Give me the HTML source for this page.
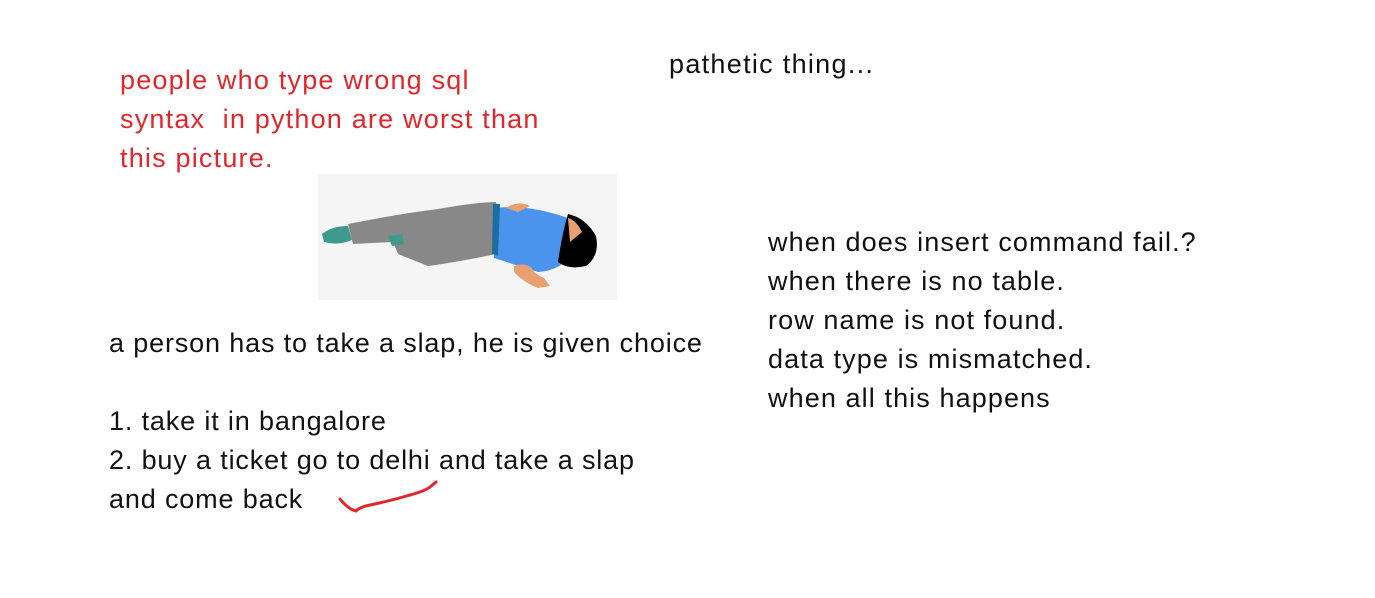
<!DOCTYPE html>
<html><head><meta charset="utf-8"><style>
html,body{margin:0;padding:0;background:#fff;width:1375px;height:598px;overflow:hidden;position:relative;font-family:"Liberation Sans",sans-serif;}
.t{position:absolute;font-size:27px;letter-spacing:0.85px;line-height:39px;color:#111;white-space:nowrap;}
.r{color:#e3262b;letter-spacing:1.2px;}
</style></head><body>
<div class="t r" style="left:120px;top:61px">people who type wrong sql<br>syntax&nbsp; in python are worst than<br>this picture.</div>
<div class="t" style="left:669px;top:45px;letter-spacing:1.3px">pathetic thing...</div>
<div class="t" style="left:768px;top:223px;letter-spacing:1.1px">when does insert command fail.?<br>when there is no table.<br>row name is not found.<br>data type is mismatched.<br>when all this happens</div>
<div class="t" style="left:109px;top:324px">a person has to take a slap, he is given choice<br><br>1. take it in bangalore<br>2. buy a ticket go to delhi and take a slap<br>and come back</div>
<svg style="position:absolute;left:318px;top:174px" width="299" height="126" viewBox="0 0 299 126">
<rect width="299" height="126" fill="#f5f5f5"/>
<path d="M30 50 Q80 40 120 35 Q160 28 178 28 L182 50 L178 80 Q140 88 110 92 L80 80 L75 68 L35 70 Z" fill="#888"/>
<path d="M4 60 Q14 52 30 52 L34 66 Q20 72 6 68 Z" fill="#3f9a8e"/>
<path d="M70 62 L84 60 L86 70 L74 72 Z" fill="#3f9a8e"/>
<path d="M178 34 Q210 30 250 44 L256 70 Q250 96 220 98 L176 84 Z" fill="#4a94ee"/>
<path d="M175 30 L182 30 L180 82 L174 80 Z" fill="#1c6ea0"/>
<path d="M250 40 Q268 44 278 62 Q282 82 268 92 Q250 96 240 88 Q244 60 250 40Z" fill="#000"/>
<path d="M250 44 Q258 46 264 58 L252 68 Z" fill="#e8a070"/>
<path d="M196 92 Q205 88 214 94 Q216 100 226 104 L232 112 L220 114 Q205 108 196 98Z" fill="#e8a070"/>
<path d="M188 34 Q200 26 212 32 L200 38 Z" fill="#e8a070"/>
</svg>
<svg style="position:absolute;left:330px;top:475px" width="120" height="45">
<path d="M10 24 Q18 34 26 36 Q30 32 40 30 Q60 26 80 20 Q95 16 100 12 L106 7" fill="none" stroke="#e3262b" stroke-width="3" stroke-linecap="round"/>
</svg>
</body></html>
